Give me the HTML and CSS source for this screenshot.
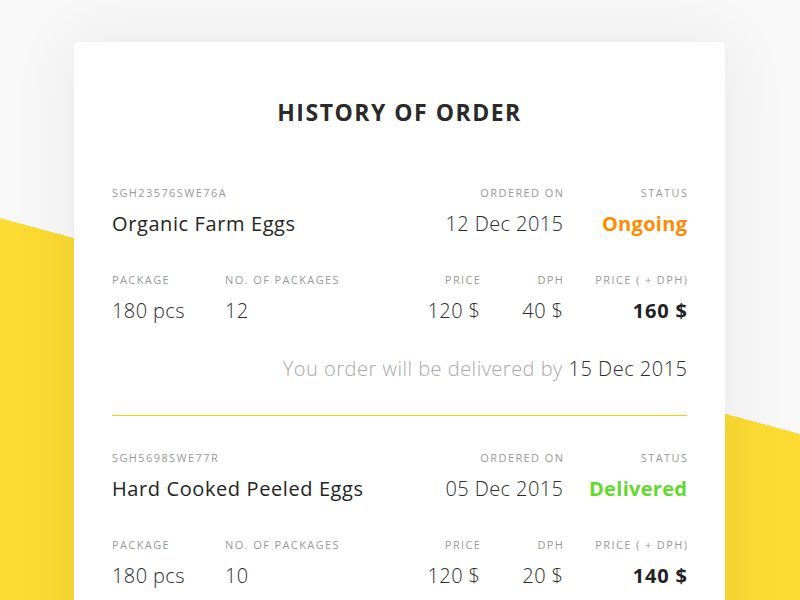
FILE: index.html
```html
<!DOCTYPE html>
<html>
<head>
<meta charset="utf-8">
<link rel="stylesheet" href="styles.css">
</head>
<body>
<div class="page">
  <div class="card">
    <h1 class="title">HISTORY OF ORDER</h1>

    <div class="order">
      <div class="head">
        <div class="cell grow">
          <div class="label">SGH23576SWE76A</div>
          <div class="name">Organic Farm Eggs</div>
        </div>
        <div class="cell right">
          <div class="label">ORDERED ON</div>
          <div class="value">12 Dec 2015</div>
        </div>
        <div class="cell right status-col">
          <div class="label">STATUS</div>
          <div class="status ongoing">Ongoing</div>
        </div>
      </div>
      <div class="details">
        <div class="cell">
          <div class="label">PACKAGE</div>
          <div class="value">180 pcs</div>
        </div>
        <div class="cell">
          <div class="label">NO. OF PACKAGES</div>
          <div class="value">12</div>
        </div>
        <div class="cell right">
          <div class="label">PRICE</div>
          <div class="value">120 $</div>
        </div>
        <div class="cell right">
          <div class="label">DPH</div>
          <div class="value">40 $</div>
        </div>
        <div class="cell right">
          <div class="label">PRICE ( + DPH)</div>
          <div class="value total">160 $</div>
        </div>
      </div>
      <div class="delivery">You order will be delivered by <span class="date">15 Dec 2015</span></div>
    </div>

    <div class="divider"></div>

    <div class="order second">
      <div class="head">
        <div class="cell grow">
          <div class="label">SGH5698SWE77R</div>
          <div class="name">Hard Cooked Peeled Eggs</div>
        </div>
        <div class="cell right">
          <div class="label">ORDERED ON</div>
          <div class="value">05 Dec 2015</div>
        </div>
        <div class="cell right status-col">
          <div class="label">STATUS</div>
          <div class="status delivered">Delivered</div>
        </div>
      </div>
      <div class="details">
        <div class="cell">
          <div class="label">PACKAGE</div>
          <div class="value">180 pcs</div>
        </div>
        <div class="cell">
          <div class="label">NO. OF PACKAGES</div>
          <div class="value">10</div>
        </div>
        <div class="cell right">
          <div class="label">PRICE</div>
          <div class="value">120 $</div>
        </div>
        <div class="cell right">
          <div class="label">DPH</div>
          <div class="value">20 $</div>
        </div>
        <div class="cell right">
          <div class="label">PRICE ( + DPH)</div>
          <div class="value total">140 $</div>
        </div>
      </div>
    </div>
  </div>
</div>
</body>
</html>
```

FILE: styles.css
```css
html {
  height: 100%;
  overflow: hidden;
  background: linear-gradient(195.1deg, #f8f8f8 419px, #fcdb32 419px) no-repeat;
  background-size: 800px 600px;
}
body {
  margin: 0;
  height: 600px;
  overflow: hidden;
  font-family: "Open Sans", "Noto Sans", sans-serif;
  color: #262626;
}
.page {
  padding-top: 42px;
}
.card {
  margin-left: 74px;
  width: 651px;
  box-sizing: border-box;
  padding: 56px 38px 40px;
  background: #fff;
  border-radius: 4px;
  box-shadow: 0 0 70px rgba(0, 0, 0, 0.07);
  min-height: 700px;
}
.title {
  margin: 0;
  text-align: center;
  font-size: 23px;
  line-height: 28px;
  font-weight: 700;
  color: #2a2a2a;
  letter-spacing: 1.5px;
}
.order {
  padding-top: 60px;
  padding-bottom: 34px;
}
.order.second {
  padding-top: 35px;
}
.divider {
  height: 1px;
  background: #f8cf00;
}
.head {
  display: flex;
  align-items: flex-start;
}
.grow {
  flex: 1;
}
.status-col {
  width: 124px;
}
.details {
  display: grid;
  grid-template-columns: 113px 1fr auto 83px 124px;
  margin-top: 37px;
}
.right {
  text-align: right;
}
.label {
  font-size: 11px;
  line-height: 14px;
  color: #999;
  font-weight: 400;
  letter-spacing: 1.4px;
  white-space: nowrap;
}
.right .label {
  margin-right: -1.4px;
}
.name {
  margin-top: 12px;
  font-size: 20px;
  line-height: 24px;
  font-weight: 400;
  color: #242424;
  letter-spacing: 0.6px;
}
.value {
  margin-top: 12px;
  font-size: 20px;
  line-height: 24px;
  font-weight: 300;
  color: #2c2c2c;
  white-space: nowrap;
  letter-spacing: 0.4px;
}
.right .value {
  margin-right: -0.4px;
}
.value.total {
  font-weight: 700;
  color: #222;
  letter-spacing: 0.8px;
  margin-right: -0.8px;
}
.status {
  margin-top: 12px;
  font-size: 20px;
  line-height: 24px;
  font-weight: 700;
  letter-spacing: 0.3px;
  margin-right: -0.3px;
}
.ongoing {
  color: #ff8a00;
}
.delivered {
  color: #63d92c;
}
.delivery {
  margin-top: 34px;
  text-align: right;
  font-size: 20px;
  line-height: 24px;
  font-weight: 300;
  color: #a8a8a8;
  letter-spacing: 0.5px;
  margin-right: -0.5px;
}
.delivery .date {
  color: #2c2c2c;
}
```
